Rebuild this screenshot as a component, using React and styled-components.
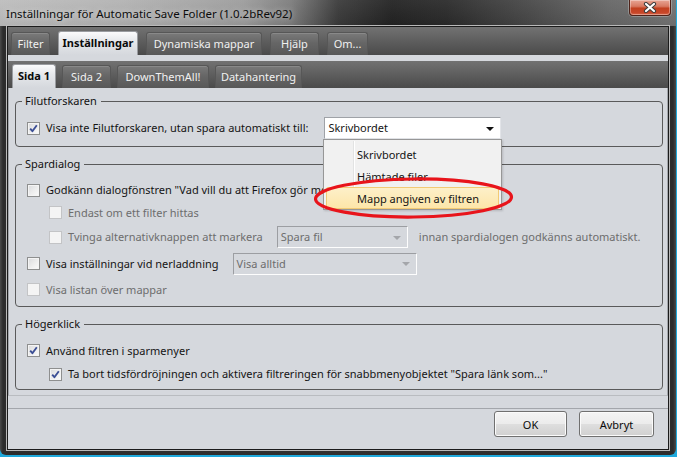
import React from 'react';
import styled, { createGlobalStyle } from 'styled-components';

const Global = createGlobalStyle`
  html, body { margin: 0; padding: 0; background: #1fa9dc; }
  body { width: 677px; height: 457px; overflow: hidden; font-family: "Noto Sans", "DejaVu Sans", sans-serif; font-size: 11px; }
  * { box-sizing: border-box; }
`;

const Window = styled.div`
  position: relative;
  width: 676px;
  height: 455px;
  display: flex;
  flex-direction: column;
  background: linear-gradient(90deg, #4a4a4a 0px, #2c2c2c 3px, #303030 50%, #2c2c2c calc(100% - 3px), #4a4a4a 100%);
  border-radius: 0 0 6px 6px;
  overflow: hidden;
`;

const TitleBar = styled.div`
  flex: none;
  height: 26px;
  display: flex;
  align-items: center;
  padding: 1px 0 0 6px;
  background:
    linear-gradient(180deg, rgba(255,255,255,0.06), rgba(0,0,0,0.05)),
    linear-gradient(90deg, #bdbdbd 0%, #b2b2b2 18%, #9c9c9c 36%, #7c7c7c 43%, #3a3a3a 50%, #222 58%, #2a2a2a 66%, #474747 78%, #666 90%, #727272 100%);
`;

const TitleText = styled.span`
  font-size: 11.5px;
  color: #0c0c0c;
  white-space: nowrap;
  text-shadow: 0 0 6px rgba(255,255,255,0.7);
`;

const CloseButton = styled.div`
  position: absolute;
  top: 0;
  right: 5px;
  width: 42px;
  height: 16px;
  display: flex;
  align-items: center;
  justify-content: center;
  border: 1px solid #4e2219;
  border-top: none;
  border-radius: 0 0 4px 4px;
  background: linear-gradient(180deg, #e8a594 0%, #d87a62 42%, #c2401f 55%, #c8472a 85%, #d86a4c 100%);
  box-shadow: inset 0 0 0 1px rgba(255,255,255,0.35), 0 0 0 1px rgba(255,255,255,0.25);
`;

const Client = styled.div`
  flex: 1;
  margin: 0 7px 5px 7px;
  border: 1px solid #1b1b1b;
  box-shadow: 0 0 0 1px #b9b9b9;
  background: #d5d8dd;
  display: flex;
  flex-direction: column;
`;

const TabBar = styled.div`
  flex: none;
  height: ${p => p.$h}px;
  display: flex;
  align-items: flex-end;
  gap: ${p => p.$gap}px;
  padding-left: ${p => p.$pl}px;
  background: linear-gradient(180deg, #727272 0%, #5e5e5e 50%, #4a4a4a 100%);
`;

const Tab = styled.div`
  width: ${p => p.$w}px;
  height: ${p => (p.$active ? 24 : 23)}px;
  display: flex;
  align-items: center;
  justify-content: center;
  padding-bottom: 2px;
  border: 1px solid ${p => (p.$active ? '#9a9ca0' : '#575757')};
  border-bottom: none;
  border-radius: 3px 3px 0 0;
  font-size: 11px;
  white-space: nowrap;
  font-weight: ${p => (p.$active ? 700 : 400)};
  color: ${p => (p.$active ? '#0a0a0a' : '#f1f1f1')};
  background: ${p =>
    p.$active
      ? 'linear-gradient(180deg, #fbfbfc 0%, #e6e8eb 40%, #d5d8dd 100%)'
      : 'linear-gradient(180deg, #7a7a7a 0%, #666 45%, #585858 100%)'};
  box-shadow: ${p => (p.$active ? 'none' : 'inset 0 1px 0 rgba(255,255,255,0.12)')};
`;

const Strip = styled.div`
  flex: none;
  height: 6px;
  background: #d5d8dd;
`;

const Panel = styled.div`
  flex: none;
  height: 308px;
  padding: 5px 4px 5px 6px;
  border-left: 1px solid #a3a6ab;
  border-right: 1px solid #a3a6ab;
  border-bottom: 1px solid #b9bcc0;
  background: #d5d8dd;
`;

const Group = styled.fieldset`
  margin: 0;
  min-inline-size: 0;
  border: 1px solid #5a5a5a;
  border-radius: 4px;
  padding: ${p => p.$pt}px 8px ${p => p.$pb}px 11px;
  & + & { margin-top: 9px; }
`;

const Legend = styled.legend`
  margin-left: -5px;
  padding: 0 4px 0 3px;
  line-height: 16px;
  font-size: 11px;
  color: #111;
`;

const Row = styled.div`
  height: ${p => p.$h}px;
  display: flex;
  align-items: center;
  padding-left: ${p => (p.$indent ? 22 : 0)}px;
  white-space: nowrap;
`;

const Box = styled.span`
  flex: none;
  width: 13px;
  height: 13px;
  display: flex;
  align-items: center;
  justify-content: center;
  border: 1px solid ${p => (p.$disabled ? '#c3c4c6' : '#8e8f8f')};
  background: ${p =>
    p.$disabled
      ? '#f4f4f4'
      : 'linear-gradient(135deg, #d9dadc 0%, #eeeeee 55%, #fbfbfb 100%)'};
  box-shadow: ${p => (p.$disabled ? 'none' : 'inset 0 0 0 1px #f4f4f4')};
`;

const Label = styled.span`
  margin-left: 6px;
  line-height: 16px;
  color: ${p => (p.$disabled ? '#6d6d6d' : '#141414')};
`;

const Select = styled.div`
  flex: none;
  width: ${p => p.$w}px;
  height: 22px;
  margin-left: ${p => p.$ml}px;
  display: flex;
  align-items: center;
  justify-content: space-between;
  padding: 0 6px 0 3px;
  border: 1px solid;
  border-color: ${p => (p.$disabled ? '#9c9ea2 #fdfdfd #fdfdfd #9c9ea2' : '#9fa2a7 #e2e4e8 #e2e4e8 #9fa2a7')};
  background: ${p => (p.$disabled ? '#d5d8dd' : '#ffffff')};
  color: ${p => (p.$disabled ? '#6d6d6d' : '#141414')};
  line-height: 16px;
`;

const Arrow = styled.span`
  width: 0;
  height: 0;
  border-left: 4px solid transparent;
  border-right: 4px solid transparent;
  border-top: 4px solid ${p => (p.$disabled ? '#a4a6aa' : '#111')};
  margin-top: 1px;
`;

const After = styled.span`
  margin-left: 11px;
  color: #6d6d6d;
  line-height: 16px;
`;

const Footer = styled.div`
  flex: 1;
  margin-top: 12px;
  border-top: 1px solid #a3a6ab;
  display: flex;
  justify-content: flex-end;
  align-items: flex-start;
  gap: 12px;
  padding: 2px 14px 0 0;
`;

const Button = styled.button`
  width: ${p => p.$w}px;
  height: 26px;
  padding: 0;
  font-family: "Noto Sans", sans-serif;
  font-size: 11px;
  color: #0a0a0a;
  border: 1px solid #707070;
  border-radius: 3px;
  background: linear-gradient(180deg, #f4f4f4 0%, #ececec 48%, #dedede 52%, #d0d0d0 100%);
  box-shadow: inset 0 0 0 1px #fbfbfb;
`;

const Menu = styled.div`
  position: absolute;
  left: 323px;
  top: 139px;
  width: 179px;
  height: 71px;
  padding: 3px 2px 0 2px;
  border: 1px solid #979797;
  background: #f1f1f1;
  box-shadow: 1px 1px 2px rgba(0,0,0,0.15);
  &::before {
    content: '';
    position: absolute;
    left: 29px;
    top: 1px;
    bottom: 1px;
    width: 1px;
    background: #e2e3e3;
    box-shadow: 1px 0 0 #ffffff;
  }
`;

const MenuItem = styled.div`
  position: relative;
  height: 22px;
  display: flex;
  align-items: center;
  padding-left: 30px;
  color: #141414;
  font-size: 11px;
  border: 1px solid ${p => (p.$hot ? '#f2ca74' : 'transparent')};
  border-radius: 2px;
  background: ${p => (p.$hot ? 'linear-gradient(180deg, #fdf0c9 0%, #fde6a9 100%)' : 'transparent')};
`;

const Ring = styled.svg`
  position: absolute;
  left: 312px;
  top: 176px;
  pointer-events: none;
`;

function Check({ checked, disabled }) {
  return (
    <Box $disabled={disabled}>
      {checked && (
        <svg width="9" height="9" viewBox="0 0 9 9">
          <path d="M1.2 4.6 L3.4 7.2 L7.8 1.3" fill="none" stroke="#3c4f95" strokeWidth="1.9" strokeLinejoin="round" />
        </svg>
      )}
    </Box>
  );
}

function Dropdown({ value, width, ml, disabled }) {
  return (
    <Select $w={width} $ml={ml} $disabled={disabled}>
      <span>{value}</span>
      <Arrow $disabled={disabled} />
    </Select>
  );
}

const topTabs = [
  { label: 'Filter', w: 39 },
  { label: 'Inställningar', w: 80, active: true },
  { label: 'Dynamiska mappar', w: 116 },
  { label: 'Hjälp', w: 49 },
  { label: 'Om...', w: 41 },
];

const subTabs = [
  { label: 'Sida 1', w: 44, active: true },
  { label: 'Sida 2', w: 49 },
  { label: 'DownThemAll!', w: 92 },
  { label: 'Datahantering', w: 87 },
];

export default function App() {
  return (
    <>
      <Global />
      <Window>
        <TitleBar>
          <TitleText>Inställningar för Automatic Save Folder (1.0.2bRev92)</TitleText>
        </TitleBar>
        <CloseButton>
          <svg width="14" height="11" viewBox="0 0 14 11">
            <path d="M3 2 L11 9 M11 2 L3 9" stroke="#3d3d3d" strokeWidth="4.2" strokeLinecap="round" />
            <path d="M3 2 L11 9 M11 2 L3 9" stroke="#ffffff" strokeWidth="2.2" strokeLinecap="round" />
          </svg>
        </CloseButton>
        <Client>
          <TabBar $h={28} $gap={8} $pl={3}>
            {topTabs.map(t => (
              <Tab key={t.label} $w={t.w} $active={t.active}>{t.label}</Tab>
            ))}
          </TabBar>
          <Strip />
          <TabBar $h={27} $gap={6} $pl={4}>
            {subTabs.map(t => (
              <Tab key={t.label} $w={t.w} $active={t.active}>{t.label}</Tab>
            ))}
          </TabBar>
          <Panel>
            <Group $pt={8} $pb={7}>
              <Legend>Filutforskaren</Legend>
              <Row $h={22}>
                <Check checked />
                <Label>Visa inte Filutforskaren, utan spara automatiskt till:</Label>
                <Dropdown value="Skrivbordet" width={177} ml={16} />
              </Row>
            </Group>
            <Group $pt={7} $pb={4}>
              <Legend>Spardialog</Legend>
              <Row $h={22}>
                <Check />
                <Label>Godkänn dialogfönstren "Vad vill du att Firefox gör med den här filen?"</Label>
              </Row>
              <Row $h={23} $indent>
                <Check disabled />
                <Label $disabled>Endast om ett filter hittas</Label>
              </Row>
              <Row $h={26} $indent>
                <Check disabled />
                <Label $disabled>Tvinga alternativknappen att markera</Label>
                <Dropdown value="Spara fil" width={131} ml={14} disabled />
                <After>innan spardialogen godkänns automatiskt.</After>
              </Row>
              <Row $h={27}>
                <Check />
                <Label>Visa inställningar vid nerladdning</Label>
                <Dropdown value="Visa alltid" width={184} ml={14} disabled />
              </Row>
              <Row $h={25}>
                <Check disabled />
                <Label $disabled>Visa listan över mappar</Label>
              </Row>
            </Group>
            <Group $pt={7} $pb={3}>
              <Legend>Högerklick</Legend>
              <Row $h={23}>
                <Check checked />
                <Label>Använd filtren i sparmenyer</Label>
              </Row>
              <Row $h={24} $indent>
                <Check checked />
                <Label>Ta bort tidsfördröjningen och aktivera filtreringen för snabbmenyobjektet "Spara länk som..."</Label>
              </Row>
            </Group>
          </Panel>
          <Footer>
            <Button $w={73}>OK</Button>
            <Button $w={75}>Avbryt</Button>
          </Footer>
        </Client>
        <Menu>
          <MenuItem>Skrivbordet</MenuItem>
          <MenuItem>Hämtade filer</MenuItem>
          <MenuItem $hot>Mapp angiven av filtren</MenuItem>
        </Menu>
        <Ring width="206" height="46" viewBox="0 0 206 46">
          <ellipse cx="101.5" cy="22" rx="98" ry="19" fill="none" stroke="#e8141b" strokeWidth="3.2" transform="rotate(-0.6 101.5 22)" />
        </Ring>
      </Window>
    </>
  );
}
